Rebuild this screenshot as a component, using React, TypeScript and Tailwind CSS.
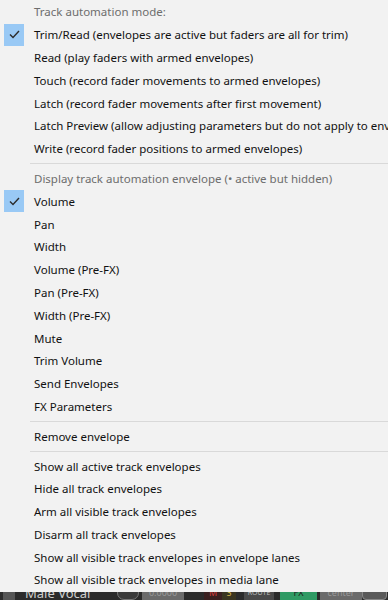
import React from "react";

type Row =
  | { kind: "header"; label: string }
  | { kind: "item"; label: string; checked?: boolean }
  | { kind: "sep" };

const ROWS: Row[] = [
  { kind: "header", label: "Track automation mode:" },
  { kind: "item", label: "Trim/Read (envelopes are active but faders are all for trim)", checked: true },
  { kind: "item", label: "Read (play faders with armed envelopes)" },
  { kind: "item", label: "Touch (record fader movements to armed envelopes)" },
  { kind: "item", label: "Latch (record fader movements after first movement)" },
  { kind: "item", label: "Latch Preview (allow adjusting parameters but do not apply to envelopes)" },
  { kind: "item", label: "Write (record fader positions to armed envelopes)" },
  { kind: "sep" },
  { kind: "header", label: "Display track automation envelope (• active but hidden)" },
  { kind: "item", label: "Volume", checked: true },
  { kind: "item", label: "Pan" },
  { kind: "item", label: "Width" },
  { kind: "item", label: "Volume (Pre-FX)" },
  { kind: "item", label: "Pan (Pre-FX)" },
  { kind: "item", label: "Width (Pre-FX)" },
  { kind: "item", label: "Mute" },
  { kind: "item", label: "Trim Volume" },
  { kind: "item", label: "Send Envelopes" },
  { kind: "item", label: "FX Parameters" },
  { kind: "sep" },
  { kind: "item", label: "Remove envelope" },
  { kind: "sep" },
  { kind: "item", label: "Show all active track envelopes" },
  { kind: "item", label: "Hide all track envelopes" },
  { kind: "item", label: "Arm all visible track envelopes" },
  { kind: "item", label: "Disarm all track envelopes" },
  { kind: "item", label: "Show all visible track envelopes in envelope lanes" },
  { kind: "item", label: "Show all visible track envelopes in media lane" },
];

function Check() {
  return (
    <div className="flex h-[22px] w-[20px] items-center justify-center bg-[#99c9f5]">
      <svg width="11" height="9" viewBox="0 0 11 9" fill="none">
        <path d="M1 4.5 L4 7.5 L10 1" stroke="#2b2b2b" strokeWidth="1.4" />
      </svg>
    </div>
  );
}

function MenuRow({ row }: { row: Row }) {
  if (row.kind === "sep") {
    return (
      <div className="flex h-[7px] items-center pl-[30px]">
        <div className="h-px w-full bg-[#d9d9d9]" />
      </div>
    );
  }
  return (
    <div className="flex h-[22.8px] items-center">
      <div className="flex w-[34px] shrink-0 items-center pl-[4px]">
        {row.kind === "item" && row.checked && <Check />}
      </div>
      <span className={row.kind === "header" ? "text-[#6d6d6d]" : "text-[#111]"}>{row.label}</span>
    </div>
  );
}

function TrackStrip() {
  return (
    <div className="flex h-[8px] items-start overflow-hidden bg-[#2b2b2b] text-[9px] leading-[14px]">
      <div className="mt-[-6px] flex items-start">
        <div className="ml-[3px] h-[14px] w-[12px] bg-[#555]" />
        <span className="ml-[10px] w-[90px] text-[13px] leading-[14px] text-[#cfcfcf]">Male Vocal</span>
        <div className="ml-[2px] h-[14px] w-[22px] rounded-full border border-[#777] bg-[#3a3a3a]" />
        <div className="ml-[3px] h-[14px] w-[42px] bg-[#6b6b6b] text-center text-[#999]">0.0000</div>
        <div className="ml-[20px] h-[14px] w-[18px] bg-[#3a2020] text-center text-[#d23c3c]">M</div>
        <div className="h-[14px] w-[14px] bg-[#3a3520] text-center text-[#d8b84a]">S</div>
        <div className="ml-[8px] h-[14px] w-[30px] bg-[#4a4a4a] text-center text-[7px] text-[#bbb]">ROUTE</div>
        <div className="ml-[6px] h-[14px] w-[37px] bg-[#2f9a64] text-center text-[#1e1e1e]">FX</div>
        <div className="ml-[3px] h-[14px] w-[42px] bg-[#6b6b6b] text-center text-[#999]">center</div>
        <div className="h-[14px] w-[25px] rounded-sm border border-[#888] bg-[#5a5a5a]" />
      </div>
    </div>
  );
}

export default function App() {
  return (
    <div className="relative h-[600px] w-[388px] overflow-hidden bg-[#2b2b2b] font-['Noto_Sans',sans-serif] text-[11.5px]">
      <div className="h-[592px] w-[460px] whitespace-nowrap bg-[#f2f2f2] pt-[0.6px] shadow-[0_1px_2px_rgba(0,0,0,0.35)]">
        {ROWS.map((row, i) => (
          <MenuRow key={i} row={row} />
        ))}
      </div>
      <TrackStrip />
    </div>
  );
}
